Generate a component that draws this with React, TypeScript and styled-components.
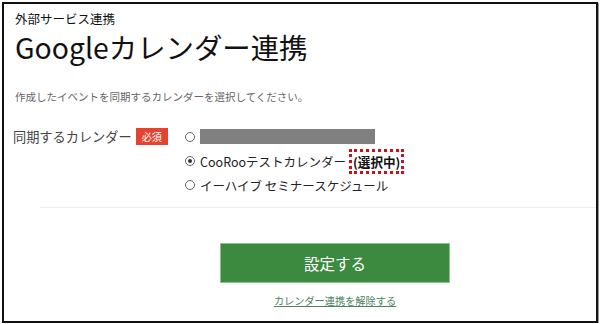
import React from "react";
import styled, { createGlobalStyle } from "styled-components";

const Global = createGlobalStyle`
  html, body { margin: 0; padding: 0; background: #fff; }
  body { padding: 2px 0 0 2px; font-family: "Noto Sans CJK JP", "Noto Sans", sans-serif; }
  * { box-sizing: border-box; }
`;

const Frame = styled.div`
  width: 596px;
  height: 321px;
  border: 2px solid #111;
  box-shadow: 1px 1px 0 #9a9a9a;
  padding: 6px 0 0 0;
  display: flex;
  flex-direction: column;
  overflow: hidden;
`;

const Section = styled.div`
  padding-left: 11px;
  display: flex;
  flex-direction: column;
`;

const Eyebrow = styled.div`
  font-size: 12.5px;
  line-height: 18px;
  color: #111;
`;

const Title = styled.h1`
  margin: 2px 0 0 0;
  font-size: 28.4px;
  font-weight: 400;
  line-height: 34px;
  color: #111;
`;

const Lead = styled.p`
  margin: 25px 0 0 0;
  font-size: 10.5px;
  line-height: 16px;
  color: #666;
`;

const FormRow = styled.div`
  margin-top: 20px;
  display: grid;
  grid-template-columns: 170px 1fr;
`;

const LabelCell = styled.div`
  display: flex;
  align-items: center;
  height: 24px;
  margin-left: -2px;
`;

const Label = styled.span`
  font-size: 13.2px;
  line-height: 24px;
  color: #444;
`;

const Required = styled.span`
  margin-left: 4px;
  width: 32px;
  height: 17px;
  background: #e5432f;
  color: #fff;
  font-size: 10px;
  display: inline-flex;
  align-items: center;
  justify-content: center;
  margin-top: -1px;
`;

const Options = styled.div`
  display: flex;
  flex-direction: column;
`;

const Option = styled.label`
  display: flex;
  align-items: center;
  height: 24px;
  font-size: 12.5px;
  color: #222;
`;

const Radio = styled.span<{ $checked?: boolean }>`
  width: 10px;
  height: 10px;
  border-radius: 50%;
  border: 1px solid #666;
  background: #fff;
  margin-right: 5px;
  display: inline-flex;
  align-items: center;
  justify-content: center;
  flex: none;
  &::after {
    content: "";
    width: 4px;
    height: 4px;
    border-radius: 50%;
    background: ${(p) => (p.$checked ? "#333" : "transparent")};
  }
`;

const Redacted = styled.span`
  width: 175px;
  height: 15px;
  background: #808080;
  margin-top: -1px;
`;

const Current = styled.span`
  margin-left: 3px;
  height: 25px;
  border: 3px dotted #c8101a;
  padding: 0 1px;
  font-weight: 700;
  font-size: 12.6px;
  display: inline-flex;
  align-items: center;
  color: #111;
`;

const Divider = styled.hr`
  margin: 10px 0 0 36px;
  border: none;
  border-top: 1px solid #ececec;
  height: 0;
`;

const Actions = styled.div`
  margin-top: 35px;
  padding-left: 216px;
  display: flex;
  flex-direction: column;
  align-items: center;
  width: 446px;
`;

const Submit = styled.button`
  width: 230px;
  height: 40px;
  background: #3c8a3f;
  border: 1px solid #8cc48e;
  color: #fff;
  font-family: inherit;
  font-size: 15.5px;
  cursor: pointer;
`;

const Unlink = styled.a`
  margin-top: 11px;
  font-size: 10.2px;
  line-height: 14px;
  color: #4b8460;
  text-decoration: underline;
`;

export default function App() {
  return (
    <>
      <Global />
      <Frame>
        <Section>
          <Eyebrow>外部サービス連携</Eyebrow>
          <Title>Googleカレンダー連携</Title>
          <Lead>作成したイベントを同期するカレンダーを選択してください。</Lead>
          <FormRow>
            <LabelCell>
              <Label>同期するカレンダー</Label>
              <Required>必須</Required>
            </LabelCell>
            <Options>
              <Option>
                <Radio />
                <Redacted />
              </Option>
              <Option>
                <Radio $checked />
                CooRooテストカレンダー
                <Current>(選択中)</Current>
              </Option>
              <Option>
                <Radio />
                イーハイブ セミナースケジュール
              </Option>
            </Options>
          </FormRow>
        </Section>
        <Divider />
        <Actions>
          <Submit>設定する</Submit>
          <Unlink href="#">カレンダー連携を解除する</Unlink>
        </Actions>
      </Frame>
    </>
  );
}
